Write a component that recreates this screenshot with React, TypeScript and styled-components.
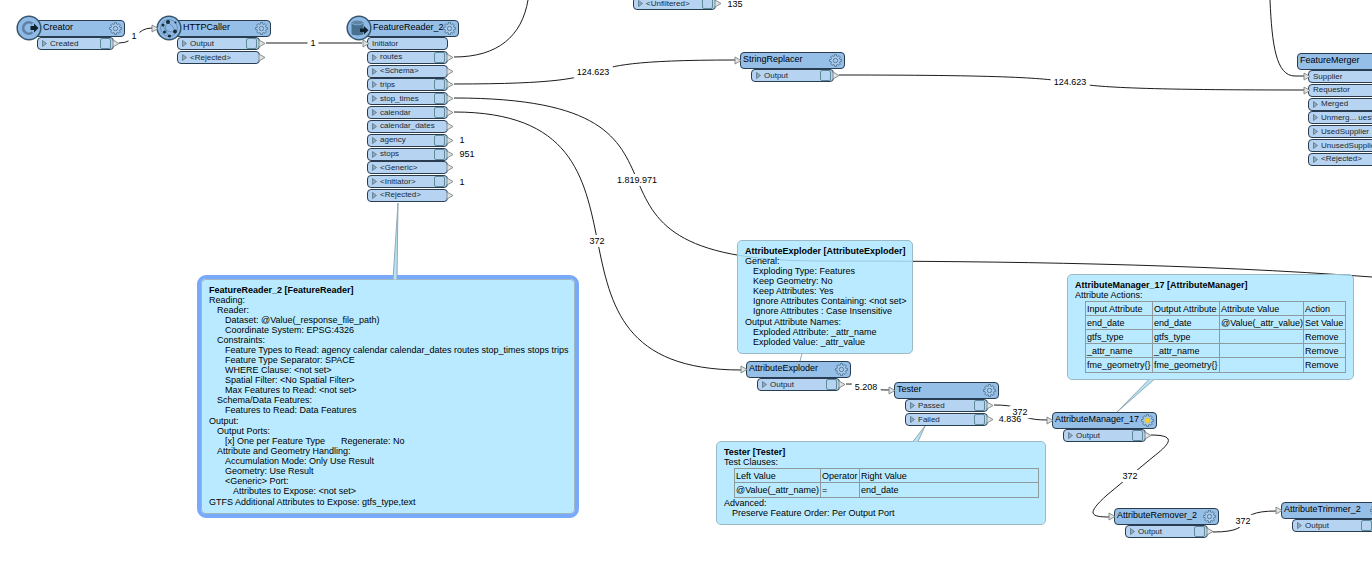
import React from "react";
import styled, { createGlobalStyle } from "styled-components";

const GlobalStyle = createGlobalStyle`
  * { box-sizing: border-box; }
  body {
    margin: 0;
    background: #fff;
    color: #000;
    font-family: "Liberation Sans", Arial, sans-serif;
    font-size: 9px;
    line-height: 10px;
  }
  button { font: inherit; color: inherit; background: none; border: 0; margin: 0; padding: 0; cursor: pointer; }
`;

const Canvas = styled.main`
  position: relative;
  min-height: 100vh;
  overflow: hidden;
`;

const Layer = styled.svg`
  position: absolute;
  inset: 0;
  width: 100%;
  height: 100%;
  pointer-events: none;
`;

const NodeBox = styled.section<{ $x: number; $y: number; $width: number }>`
  position: absolute;
  left: ${(p) => p.$x}px;
  top: ${(p) => p.$y}px;
  width: ${(p) => p.$width}px;
`;

const NodeHeader = styled.header<{ $badge: boolean }>`
  display: flex;
  align-items: center;
  height: 17px;
  padding: 0 2px 0 ${(p) => (p.$badge ? 13 : 2)}px;
  border: 1px solid #2a3d50;
  border-radius: 4px;
  background: #96bfe8;
`;

const NodeTitle = styled.h2`
  flex: 1;
  width: 0;
  margin: 0;
  padding-bottom: 3px;
  font-size: 9px;
  line-height: 12px;
  font-weight: 400;
  white-space: nowrap;
`;

const GearButton = styled.button`
  width: 13px;
  height: 13px;
  svg { display: block; }
`;

const Badge = styled.svg`
  position: absolute;
  left: -13px;
  top: -5px;
`;

const Ports = styled.ul<{ $inset: number; $width: number; $height?: number }>`
  display: flex;
  flex-direction: column;
  justify-content: space-between;
  gap: ${(p) => (p.$height ? 0 : 1)}px;
  list-style: none;
  margin: 0 0 0 ${(p) => p.$inset}px;
  padding: 0;
  width: ${(p) => p.$width}px;
  ${(p) => (p.$height ? `height: ${p.$height}px;` : "")}
`;

const PortRow = styled.li`
  position: relative;
  display: flex;
  align-items: center;
  gap: 3px;
  height: 13px;
  padding: 0 1px 0 4px;
  border: 1px solid #2a3d50;
  border-radius: 4px;
  background: #b6d4f1;
  color: #1c2834;
  font-size: 8px;
  line-height: 10px;
  white-space: nowrap;
`;

const ExpandButton = styled.button`
  width: 5px;
  height: 9px;
  svg { display: block; }
`;

const PortName = styled.span`
  flex: 1;
  width: 0;
`;

const InspectButton = styled.button`
  width: 11px;
  height: 11px;
  margin-right: 1px;
  border: 1px solid #5d8b98;
  border-radius: 2px;
`;

type Side = "port-in" | "port-out" | "header" | "badge";

const arrowPlace: Record<Side, string> = {
  "port-in": "top: 1px; left: -6px;",
  "port-out": "top: 1px; right: -7px;",
  header: "top: 4px; left: -6px;",
  badge: "top: 4px; left: -18px;",
};

const Arrow = styled.svg<{ $side: Side }>`
  position: absolute;
  ${(p) => arrowPlace[p.$side]}
`;

const Count = styled.span<{ $x: number; $y: number; $onWire?: boolean }>`
  position: absolute;
  left: ${(p) => p.$x}px;
  top: ${(p) => p.$y}px;
  transform: translate(-50%, -50%);
  padding: ${(p) => (p.$onWire ? "1px 3px" : "0")};
  background: ${(p) => (p.$onWire ? "#fff" : "transparent")};
`;

const Note = styled.article<{ $x: number; $y: number; $width: number; $selected?: boolean }>`
  position: absolute;
  left: ${(p) => p.$x}px;
  top: ${(p) => p.$y}px;
  width: ${(p) => p.$width}px;
  padding: 5px 7px 6px;
  border: 1px solid #9cb9c4;
  border-radius: 5px;
  background: rgba(174, 230, 255, 0.85);
  white-space: nowrap;
  ${(p) => (p.$selected ? "outline: 4px solid #78a9fb;" : "")}
`;

const NoteTitle = styled.h3`
  margin: 0;
  font-size: 9px;
  line-height: 10px;
  font-weight: 700;
`;

const Line = styled.div<{ $level?: number }>`
  padding-left: ${(p) => (p.$level ?? 0) * 8}px;
`;

const Outline = styled.div`
  ${Line}.section {
    margin-top: 1px;
  }
`;

const Regenerate = styled.span`
  margin-left: 16px;
`;

const DataTable = styled.table<{ $width: number }>`
  width: ${(p) => p.$width}px;
  margin: 1px 0 0 10px;
  border-collapse: collapse;
  table-layout: fixed;
  th, td {
    height: 14px;
    padding: 0 1px;
    border: 1px solid #8f9a9f;
    text-align: left;
    font-weight: 400;
  }
  tr:last-child td { height: 15px; }
`;

function gearPath(c: number, outer: number, inner: number) {
  const pts: string[] = [];
  for (let i = 0; i < 8; i++) {
    const mid = (i * Math.PI) / 4;
    [[-0.26, inner], [-0.17, outer], [0.17, outer], [0.26, inner]].forEach(([d, r]) => {
      pts.push(`${(c + Math.cos(mid + d) * r).toFixed(2)} ${(c + Math.sin(mid + d) * r).toFixed(2)}`);
    });
  }
  return `M${pts.join("L")}Z`;
}
const GEAR = gearPath(6.5, 6, 4.5);

function Gear({ active }: { active?: boolean }) {
  return (
    <svg width="13" height="13" viewBox="0 0 13 13" fill="none" stroke="#4f7696" strokeWidth="0.9">
      <path d={GEAR} fill="#a9cbec" />
      {active ? (
        <circle cx="6.5" cy="6.5" r="2.4" fill="#ffd21c" stroke="#d9c04a" />
      ) : (
        <circle cx="6.5" cy="6.5" r="2.2" />
      )}
    </svg>
  );
}

function PortArrow({ side }: { side: Side }) {
  return (
    <Arrow $side={side} width="8" height="9" viewBox="0 0 8 9">
      <path d="M1 1L7 4.5L1 8Z" fill="#dfe3e3" stroke="#7d8484" strokeWidth="0.9" />
    </Arrow>
  );
}

type BadgeKind = "creator" | "http" | "reader";

function NodeBadge({ kind }: { kind: BadgeKind }) {
  return (
    <Badge width="26" height="26" viewBox="0 0 26 26">
      <circle cx="13" cy="13" r="11.8" fill="#90bae6" stroke="#35566f" strokeWidth="1.5" />
      {kind === "creator" && (
        <>
          <path d="M16.5 8.8A5.6 5.6 0 1 0 16.5 17.2" fill="none" stroke="#5d83a8" strokeWidth="2.8" />
          <path d="M14.5 11H18V8.600L22.5 13L18 17.4V15H14.5Z" fill="#10202c" />
        </>
      )}
      {kind === "http" && (
        <>
          <g fill="none" stroke="#55809f" strokeWidth="0.7">
            <circle cx="13" cy="13" r="8.4" />
            <path d="M12 7C8 11 9 17 13.5 21M12 7C15 10 18 12 19 16.500M7 10C8 15 13 18 19 16.5" />
          </g>
          <g fill="#172a38">
            <circle cx="12" cy="7" r="2" />
            <circle cx="7" cy="10" r="1.5" />
            <circle cx="8.5" cy="17" r="1.5" />
            <circle cx="13.5" cy="21" r="1.6" />
            <circle cx="19" cy="16.5" r="1.9" />
            <circle cx="19.5" cy="7.5" r="1" />
          </g>
        </>
      )}
      {kind === "reader" && (
        <>
          <path d="M5.500 7.5V18.500C5.5 21 17.5 21 17.5 18.5V7.5Z" fill="#48708f" />
          <ellipse cx="11.5" cy="7.5" rx="6" ry="2.3" fill="#5d86a6" stroke="#90bae6" strokeWidth="0.7" />
          <path d="M14 13.5H18V11L22.5 15.2L18 19.4V17H14Z" fill="#10202c" />
        </>
      )}
    </Badge>
  );
}

type Port = { name: string; kind?: "in" | "out"; box?: boolean };

type NodeProps = {
  x: number;
  y: number;
  title: string;
  ports: Port[];
  width?: number;
  portWidth?: number;
  portsHeight?: number;
  badge?: BadgeKind;
  input?: boolean;
  active?: boolean;
};

function Transformer({ x, y, title, ports, width = 105, portWidth = 83, portsHeight, badge, input, active }: NodeProps) {
  return (
    <NodeBox $x={x} $y={y} $width={width}>
      <NodeHeader $badge={!!badge}>
        <NodeTitle>{title}</NodeTitle>
        <GearButton aria-label={`${title} parameters`}>
          <Gear active={active} />
        </GearButton>
      </NodeHeader>
      {badge && <NodeBadge kind={badge} />}
      {input && <PortArrow side={badge ? "badge" : "header"} />}
      <PortList ports={ports} inset={badge ? 8 : 11} width={portWidth} height={portsHeight} />
    </NodeBox>
  );
}

function PortList({ ports, inset, width, height }: { ports: Port[]; inset: number; width: number; height?: number }) {
  return (
    <Ports $inset={inset} $width={width} $height={height}>
      {ports.map((p) => (
        <PortRow key={p.name}>
          {p.kind === "in" ? (
            <PortArrow side="port-in" />
          ) : (
            <ExpandButton aria-label={`Expand ${p.name}`}>
              <svg width="5" height="9" viewBox="0 0 5 9">
                <path d="M0.5 1.5L4.5 4.5L0.5 7.5Z" fill="#8fa9bd" stroke="#5b7488" strokeWidth="0.8" />
              </svg>
            </ExpandButton>
          )}
          <PortName>{p.name}</PortName>
          {p.box && <InspectButton aria-label={`Inspect ${p.name}`} />}
          {p.kind !== "in" && <PortArrow side="port-out" />}
        </PortRow>
      ))}
    </Ports>
  );
}

const output: Port[] = [{ name: "Output", box: true }];

const readerPorts: Port[] = [
  { name: "Initiator", kind: "in" },
  { name: "routes", box: true },
  { name: "<Schema>" },
  { name: "trips", box: true },
  { name: "stop_times", box: true },
  { name: "calendar", box: true },
  { name: "calendar_dates" },
  { name: "agency", box: true },
  { name: "stops", box: true },
  { name: "<Generic>" },
  { name: "<Initiator>", box: true },
  { name: "<Rejected>" },
];

const mergerPorts: Port[] = [
  { name: "Supplier", kind: "in" },
  { name: "Requestor", kind: "in" },
  { name: "Merged", box: true },
  { name: "Unmerg... uestor", box: true },
  { name: "UsedSupplier", box: true },
  { name: "UnusedSupplier", box: true },
  { name: "<Rejected>" },
];

const wires = [
  "M119 43C136 43 136 28 152 28",
  "M266 43H362",
  "M454 57C498 57 522 36 528 0",
  "M454 84C664 84 526 60 735 60",
  "M454 98C750 98 524 261 820 261C1000 261 1200 264 1372 277",
  "M454 112C689 112 506 370 741 370",
  "M839 75C1209 75 931 90 1304 90",
  "M1270 0C1272 45 1276 76 1295 76H1304",
  "M846 384C882 384 854 390 890 390",
  "M994 405C1037 405 1005 420 1048 420",
  "M1151 435C1180 435 1167 446 1153 457L1107 495C1086 514 1090 517 1110 517",
  "M1213 532C1263 532 1226 511 1277 511",
];

const tails = [
  "M393 279.5L398 203L397 279.5",
  "M800 361L802 353.5",
  "M913 441.5L925 426L918 441.5",
  "M1149 379.5L1117 412L1154 379.5",
];

type NoteLine = [number, React.ReactNode];

const readerNote: NoteLine[] = [
  [0, "Reading:"],
  [1, "Reader:"],
  [2, "Dataset: @Value(_response_file_path)"],
  [2, "Coordinate System: EPSG:4326"],
  [1, "Constraints:"],
  [2, "Feature Types to Read: agency calendar calendar_dates routes stop_times stops trips"],
  [2, "Feature Type Separator: SPACE"],
  [2, "WHERE Clause: <not set>"],
  [2, "Spatial Filter: <No Spatial Filter>"],
  [2, "Max Features to Read: <not set>"],
  [1, "Schema/Data Features:"],
  [2, "Features to Read: Data Features"],
  [0, "Output:"],
  [1, "Output Ports:"],
  [2, <>[x] One per Feature Type<Regenerate>Regenerate: No</Regenerate></>],
  [1, "Attribute and Geometry Handling:"],
  [2, "Accumulation Mode: Only Use Result"],
  [2, "Geometry: Use Result"],
  [2, "<Generic> Port:"],
  [3, "Attributes to Expose: <not set>"],
  [0, "GTFS Additional Attributes to Expose: gtfs_type,text"],
];

const exploderNote: NoteLine[] = [
  [0, "General:"],
  [1, "Exploding Type: Features"],
  [1, "Keep Geometry: No"],
  [1, "Keep Attributes: Yes"],
  [1, "Ignore Attributes Containing: <not set>"],
  [1, "Ignore Attributes : Case Insensitive"],
  [0, "Output Attribute Names:"],
  [1, "Exploded Attribute: _attr_name"],
  [1, "Exploded Value: _attr_value"],
];

function Lines({ items }: { items: NoteLine[] }) {
  return (
    <Outline>
      {items.map(([level, text], i) => (
        <Line key={i} $level={level} className={level === 0 && i > 0 ? "section" : undefined}>{text}</Line>
      ))}
    </Outline>
  );
}

function Grid({ width, cols, head, rows }: { width: number; cols: number[]; head: string[]; rows: string[][] }) {
  return (
    <DataTable $width={width}>
      <colgroup>{cols.map((w, i) => <col key={i} width={w} />)}</colgroup>
      <thead>
        <tr>{head.map((h) => <th key={h} scope="col">{h}</th>)}</tr>
      </thead>
      <tbody>
        {rows.map((r) => (
          <tr key={r[0]}>{r.map((c, i) => <td key={i}>{c}</td>)}</tr>
        ))}
      </tbody>
    </DataTable>
  );
}

export default function App() {
  return (
    <Canvas>
      <GlobalStyle />
      <Layer fill="none" stroke="#1c1c1c" strokeWidth="1" aria-hidden="true">
        {wires.map((d) => <path key={d} d={d} />)}
      </Layer>

      <Count $x={134} $y={36} $onWire>1</Count>
      <Count $x={313} $y={43} $onWire>1</Count>
      <Count $x={593} $y={72} $onWire>124.623</Count>
      <Count $x={637} $y={180} $onWire>1.819.971</Count>
      <Count $x={597} $y={241} $onWire>372</Count>
      <Count $x={1070} $y={82} $onWire>124.623</Count>
      <Count $x={866} $y={387} $onWire>5.208</Count>
      <Count $x={1020} $y={412} $onWire>372</Count>
      <Count $x={1010} $y={419}>4.836</Count>
      <Count $x={1130} $y={476} $onWire>372</Count>
      <Count $x={1243} $y={521} $onWire>372</Count>
      <Count $x={462} $y={140}>1</Count>
      <Count $x={467} $y={154}>951</Count>
      <Count $x={462} $y={182}>1</Count>
      <Count $x={735} $y={4}>135</Count>

      <Transformer x={29} y={20} width={96} portWidth={77} title="Creator" badge="creator" ports={[{ name: "Created", box: true }]} />
      <Transformer x={169} y={20} width={102} title="HTTPCaller" badge="http" input ports={[{ name: "Output", box: true }, { name: "<Rejected>" }]} />
      <Transformer x={359} y={20} width={100} portWidth={81} portsHeight={165} title="FeatureReader_2" badge="reader" ports={readerPorts} />
      <NodeBox $x={633} $y={-3} $width={83}>
        <PortList inset={0} width={83} ports={[{ name: "<Unfiltered>", box: true }]} />
      </NodeBox>
      <Transformer x={740} y={52} title="StringReplacer" input ports={output} />
      <Transformer x={1297} y={53} portsHeight={96} title="FeatureMerger" ports={mergerPorts} />
      <Transformer x={746} y={361} title="AttributeExploder" input ports={output} />
      <Transformer x={894} y={382} title="Tester" input ports={[{ name: "Passed", box: true }, { name: "Failed", box: true }]} />
      <Transformer x={1052} y={412} title="AttributeManager_17" input active ports={output} />
      <Transformer x={1114} y={508} title="AttributeRemover_2" input ports={output} />
      <Transformer x={1281} y={502} title="AttributeTrimmer_2" input ports={output} />

      <Note $x={201} $y={279} $width={374} $selected>
        <NoteTitle>FeatureReader_2 [FeatureReader]</NoteTitle>
        <Lines items={readerNote} />
      </Note>
      <Note $x={737} $y={240} $width={176}>
        <NoteTitle>AttributeExploder [AttributeExploder]</NoteTitle>
        <Lines items={exploderNote} />
      </Note>
      <Note $x={716} $y={441} $width={330}>
        <NoteTitle>Tester [Tester]</NoteTitle>
        <Line>Test Clauses:</Line>
        <Grid
          width={304}
          cols={[86, 39, 179]}
          head={["Left Value", "Operator", "Right Value"]}
          rows={[["@Value(_attr_name)", "=", "end_date"]]}
        />
        <Line>Advanced:</Line>
        <Line $level={1}>Preserve Feature Order: Per Output Port</Line>
      </Note>
      <Note $x={1067} $y={274} $width={287}>
        <NoteTitle>AttributeManager_17 [AttributeManager]</NoteTitle>
        <Line>Attribute Actions:</Line>
        <Grid
          width={260}
          cols={[67, 67, 84, 42]}
          head={["Input Attribute", "Output Attribute", "Attribute Value", "Action"]}
          rows={[
            ["end_date", "end_date", "@Value(_attr_value)", "Set Value"],
            ["gtfs_type", "gtfs_type", "", "Remove"],
            ["_attr_name", "_attr_name", "", "Remove"],
            ["fme_geometry{}", "fme_geometry{}", "", "Remove"],
          ]}
        />
      </Note>

      <Layer fill="#b4e4f6" stroke="#93a9b3" strokeWidth="1" aria-hidden="true">
        {tails.map((d) => <path key={d} d={d} />)}
      </Layer>
    </Canvas>
  );
}
